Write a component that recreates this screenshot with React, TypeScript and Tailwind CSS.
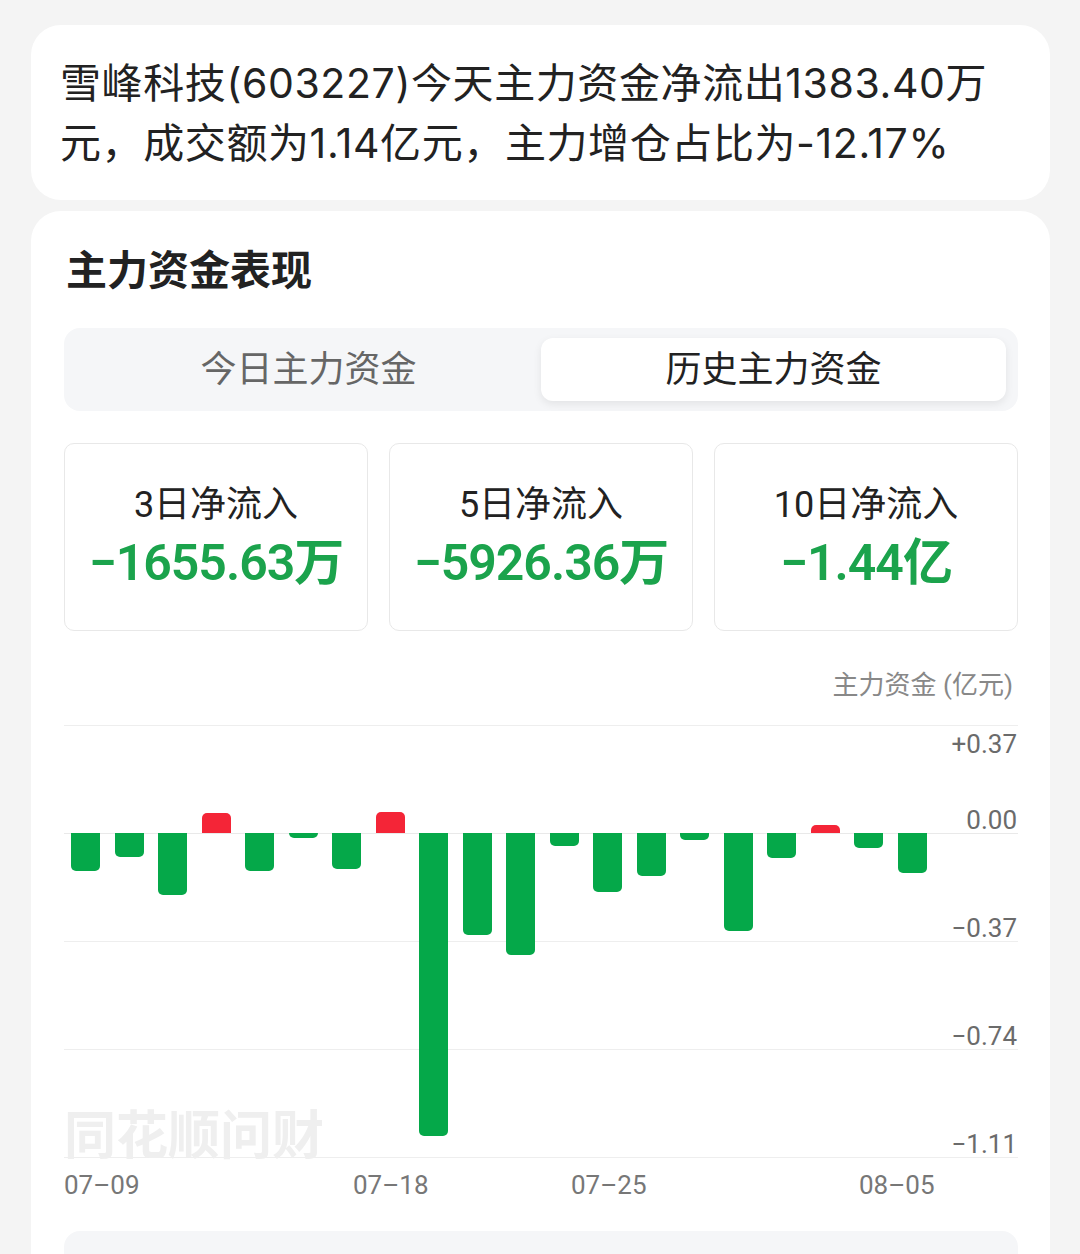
const bars = [38, 24, 62, -20, 38, 5, 36, -21, 303, 102, 122, 13, 59, 43, 7, 98, 25, -8, 15, 40]

const stats = [
  { label: '3日净流入', value: '−1655.63万' },
  { label: '5日净流入', value: '−5926.36万' },
  { label: '10日净流入', value: '−1.44亿' },
]

const dates = [
  { text: '07–09', left: 0 },
  { text: '07–18', left: 289 },
  { text: '07–25', left: 507 },
  { text: '08–05', left: 795 },
]

function AxisLabel({ children }: { children: React.ReactNode }) {
  return <div className="text-right text-[26px] leading-[26px] text-[#6b6b6b]">{children}</div>
}

function FundChart() {
  return (
    <div>
      <div className="relative border-t border-[#eeeeee]">
        {/* grid rows + y axis */}
        <div className="flex h-[108px] flex-col justify-between border-b border-[#e9e9e9] pt-[5px] pr-px">
          <AxisLabel>+0.37</AxisLabel>
          <AxisLabel>0.00</AxisLabel>
        </div>
        {['−0.37', '−0.74', '−1.11'].map((t) => (
          <div key={t} className="flex h-[108px] flex-col justify-end border-b border-[#eeeeee] pr-px">
            <AxisLabel>{t}</AxisLabel>
          </div>
        ))}

        {/* watermark */}
        <div className="pointer-events-none absolute left-0 top-[383px] select-none text-[52px] font-bold leading-[56px] text-[#efefef]">
          同花顺问财
        </div>

        {/* bars */}
        <div className="absolute inset-0 flex gap-[14.5px] pl-[7px]">
          {bars.map((h, i) => (
            <div key={i} className="flex w-[29px] flex-col">
              <div className="flex h-[107px] flex-col justify-end">
                {h < 0 && <div className="rounded-t-[5px] bg-[#f42537]" style={{ height: -h }} />}
              </div>
              {h > 0 && <div className="rounded-b-[5px] bg-[#05a849]" style={{ height: h }} />}
            </div>
          ))}
        </div>
      </div>

      {/* x axis */}
      <div className="relative h-[73px]">
        {dates.map((d) => (
          <div
            key={d.text}
            className="absolute top-[12px] text-[26px] leading-[30px] text-[#777777]"
            style={{ left: d.left }}
          >
            {d.text}
          </div>
        ))}
      </div>
    </div>
  )
}

export default function App() {
  return (
    <div className="min-h-[1254px] bg-[#f4f4f4] pl-[31px] pr-[30px] pt-[25px] font-['Roboto','Noto_Sans_CJK_SC',sans-serif] text-[#222222]">
      {/* summary */}
      <div className="rounded-[30px] bg-white pb-[27px] pl-[29px] pr-[40px] pt-[28px]">
        <p className="font-['Inter','Noto_Sans_CJK_SC',sans-serif] text-[41px] leading-[60px] tracking-[0.6px] text-[#222222]">
          雪峰科技(603227)今天主力资金净流出1383.40万元，成交额为1.14亿元，主力增仓占比为-12.17%
        </p>
      </div>

      {/* main fund card */}
      <div className="mt-[11px] rounded-t-[30px] bg-white pl-[33px] pr-[32px] pt-[32px]">
        <h2 className="pl-[2px] text-[41px] font-bold leading-[56px] text-[#222222]">主力资金表现</h2>

        <div className="mt-[29px] grid grid-cols-2 rounded-[16px] bg-[#f5f6f8] px-[12px] py-[10px]">
          <div className="flex h-[63px] items-center justify-center text-[36px] text-[#666666]">今日主力资金</div>
          <div className="flex h-[63px] items-center justify-center rounded-[12px] bg-white text-[36px] text-[#222222] shadow-[0_3px_8px_rgba(0,0,0,0.08)]">
            历史主力资金
          </div>
        </div>

        <div className="mt-[32px] grid grid-cols-3 gap-[21px]">
          {stats.map((s) => (
            <div
              key={s.label}
              className="flex h-[188px] flex-col items-center rounded-[10px] border border-[#e8e8e8] pt-[37px]"
            >
              <div className="text-[36px] leading-[48px] text-[#222222]">{s.label}</div>
              <div className="mt-[4px] text-[50px] font-semibold leading-[60px] tracking-[-1px] text-[#1ba34c]">
                {s.value}
              </div>
            </div>
          ))}
        </div>

        <div className="mt-[36px] pr-[5px] text-right text-[26px] leading-[36px] text-[#888888]">主力资金 (亿元)</div>

        <div className="mt-[22px]">
          <FundChart />
        </div>

        <div className="h-[40px] rounded-t-[16px] bg-[#f5f6f8]" />
      </div>
    </div>
  )
}
